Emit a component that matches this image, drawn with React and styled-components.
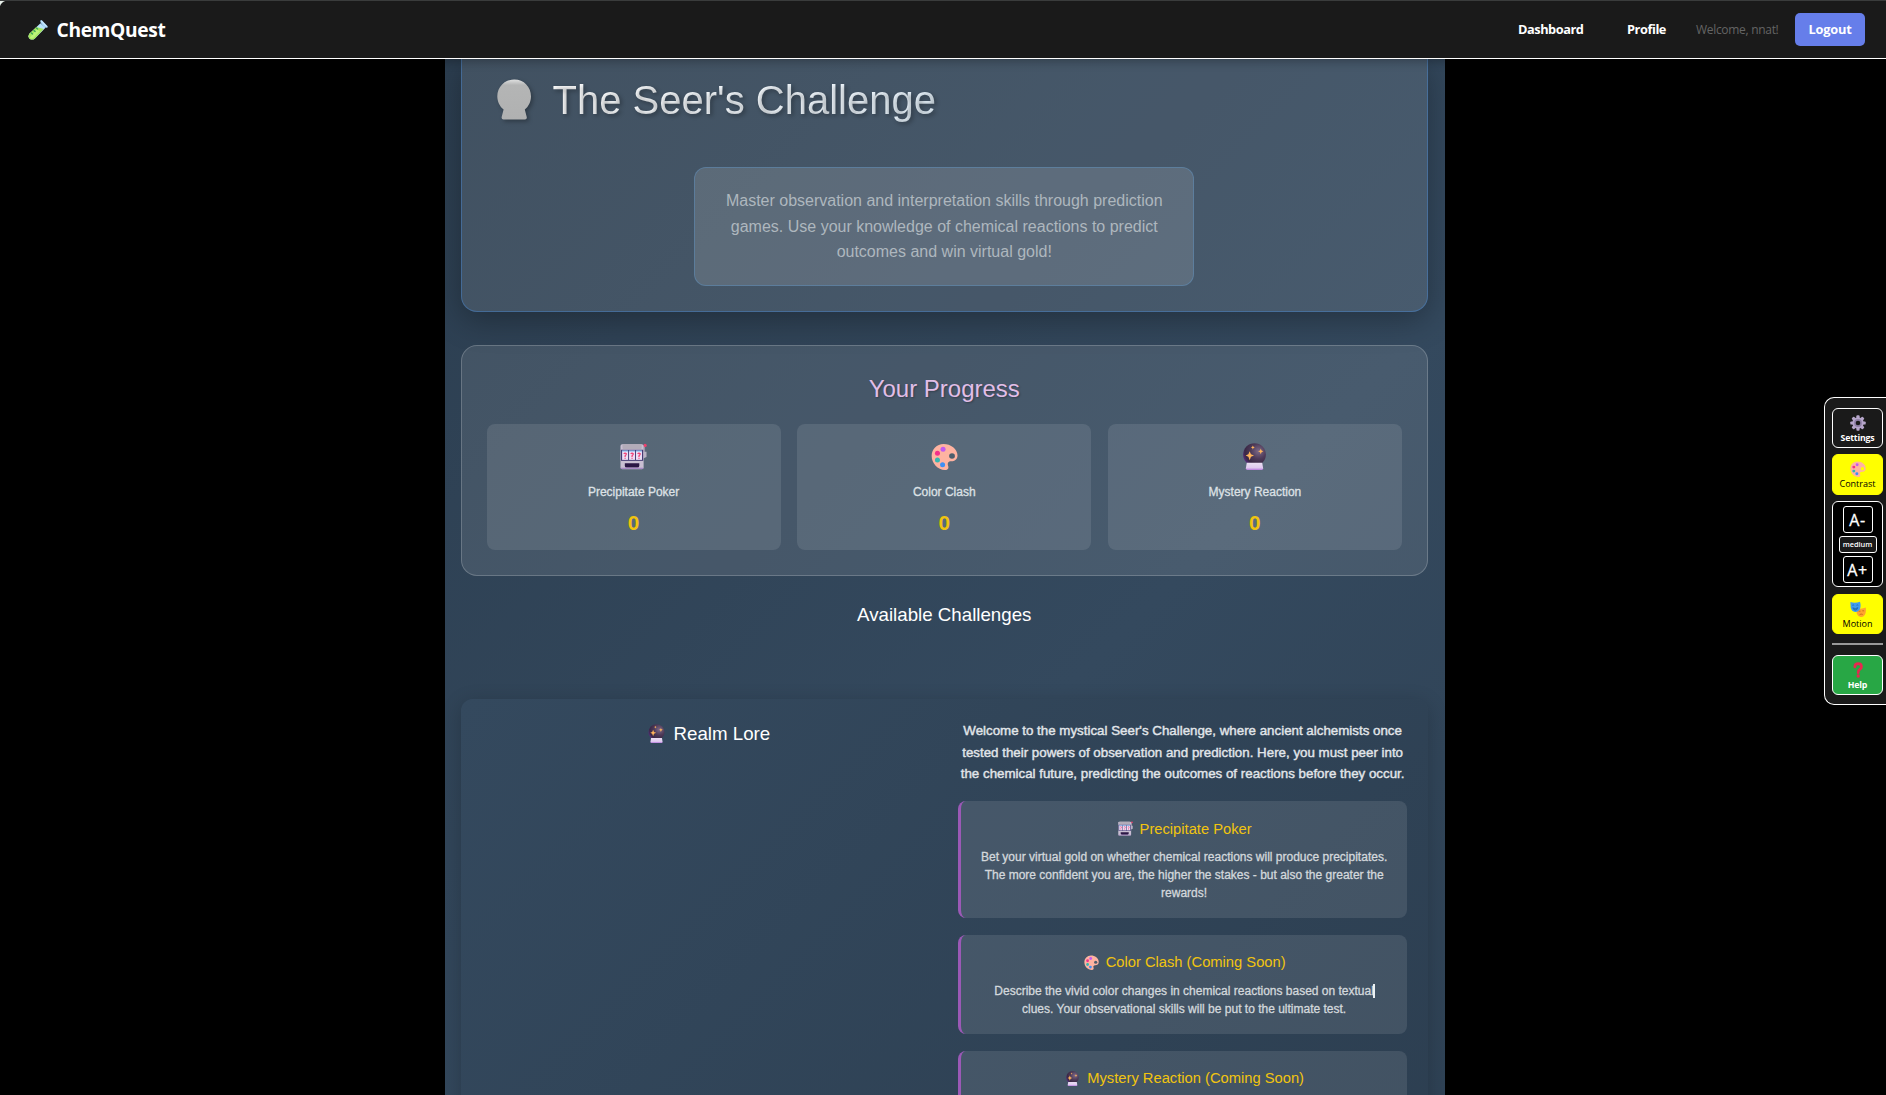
import React from 'react';
import styled, { createGlobalStyle } from 'styled-components';

const GlobalStyle = createGlobalStyle`
    *{
        box-sizing: border-box;
    }
    html, body{
        margin: 0;
        height: 100%;
        overflow: hidden;
        background: #000;
    }
    h1, h2, h3, h4, p{
        margin: 0;
        font-weight: 400;
    }
    button{
        font-family: inherit;
        margin: 0;
        padding: 0;
    }
    svg{
        display: block;
        flex: none;
    }
`;

/* Icons */

function TestTube({ size }) {
    return (
        <svg width={size} height={size} viewBox="0 0 32 32">
            <path d="M20 5 L28 12.500 L11 29.500 Q7 33 2.500 30 Q-1 26 2.500 21.500 Z" fill="#b9e3fb" />
            <path d="M13.500 11 L25 14.500 L11 29.500 Q7 33 2.500 30 Q-1 26 2.500 21.500 Z" fill="#a5e65c" />
            <path d="M14 15 L19 18 L8 29 Q5 30.500 3 28 Z" fill="#bdf57a" />
            <path d="M19.500 1.500 Q21 -1 23 1 L31 9.500 Q32.500 12 30 12.500 Q27 12.500 24 9.500 Q19.500 5 19.500 1.500Z" fill="#a8d8fb" />
            <path d="M21.500 1.500 L30 10.500" stroke="#dff3ff" strokeWidth="1.500" />
            <path d="M5 20.500l3 2.500M9 16.500l3 2.500M13 12.500l3 2.500" stroke="#2f9c5b" strokeWidth="2" />
        </svg>
    );
}

function SlotMachine({ size }) {
    return (
        <svg width={size} height={size} viewBox="0 0 28 28">
            <rect x="24" y="3" width="2" height="9" fill="#9a93a6" />
            <circle cx="26" cy="2.500" r="1.700" fill="#f0406e" />
            <path d="M24 9h3.500v5.500L24 16z" fill="#b9b2c4" />
            <rect x="0.500" y="1.200" width="24" height="26" rx="1.800" fill="#c9bfd2" />
            <rect x="2.500" y="1.200" width="20" height="5" rx="1" fill="#b3acb9" />
            <rect x="1" y="7" width="23" height="11.500" fill="#433b74" />
            <rect x="2.200" y="8" width="6.200" height="9.500" fill="#ecdff6" />
            <rect x="9.400" y="8" width="6.200" height="9.500" fill="#ecdff6" />
            <rect x="16.600" y="8" width="6.200" height="9.500" fill="#ecdff6" />
            <path d="M2.200 8.300h6.200M9.400 8.300h6.200M16.600 8.300h6.200" stroke="#74b8ef" strokeWidth="1.200" />
            <g fill="none" stroke="#ef3f74" strokeWidth="1.300">
                <path d="M3.900 11.200q1.400-1.600 2.700 0q0 1.200-1.300 2v1.200M5.300 15.200v1.100" />
                <path d="M11.100 11.200q1.400-1.600 2.700 0q0 1.200-1.300 2v1.200M12.500 15.200v1.100" />
                <path d="M18.300 11.200q1.400-1.600 2.700 0q0 1.200-1.300 2v1.200M19.700 15.200v1.100" />
            </g>
            <path d="M5 21h15v2.500q0 2-2 2H7q-2 0-2-2z" fill="#2b1745" />
            <path d="M1 26.300h23" stroke="#a98ac6" strokeWidth="1.300" />
        </svg>
    );
}

function Palette({ size, hole = '#4d5e6d' }) {
    return (
        <svg width={size} height={size} viewBox="0 0 28 28">
            <path d="M13 1C6 1 0.700 6.500 0.700 13.500C0.700 21 7 28 14.500 28C17.800 28 18.600 25.800 17.800 23.800C16.800 21 17.800 19 21 19C24.500 19 27.500 17 27.500 13C27.500 6 20.500 1 13 1Z" fill="#ffb3a1" />
            <ellipse cx="21.800" cy="13.500" rx="3" ry="2.800" fill={hole} />
            <circle cx="12.500" cy="6.500" r="2.600" fill="#c45af0" />
            <circle cx="6.700" cy="10.700" r="2.600" fill="#f2308b" />
            <circle cx="6.700" cy="17.700" r="2.600" fill="#35b6b0" />
            <circle cx="12" cy="22.500" r="2.600" fill="#3f8ff5" />
        </svg>
    );
}

function CrystalBall({ size }) {
    return (
        <svg width={size} height={size} viewBox="0 0 28 28">
            <defs>
                <radialGradient id="orb" cx="0.680" cy="0.350" r="0.750">
                    <stop offset="0" stopColor="#7d6a88" />
                    <stop offset="0.450" stopColor="#4d3a58" />
                    <stop offset="0.800" stopColor="#3a2745" />
                    <stop offset="1" stopColor="#5b2c86" />
                </radialGradient>
                <linearGradient id="orbBase" x1="0" y1="0" x2="0" y2="1">
                    <stop offset="0" stopColor="#eadff2" />
                    <stop offset="0.700" stopColor="#e0c8f0" />
                    <stop offset="1" stopColor="#b678dc" />
                </linearGradient>
            </defs>
            <circle cx="14" cy="12" r="11.800" fill="url(#orb)" />
            <path d="M6 20.500h16l1 6q0 1.500-1.500 1.500h-15q-1.500 0-1.500-1.500z" fill="url(#orbBase)" />
            <g fill="#ffb45c">
                <path d="M9 8.500l1.300 3.200L13.500 13l-3.200 1.300L9 18l-1.300-3.700L4.800 13l2.900-1.300z" />
                <path d="M20.500 5.800l.8 2 1.900.8-1.900.9-.8 2.200-.8-2.200-1.900-.9 1.900-.8z" />
                <path d="M12.300 2.600l.6 1.400 1.400.6-1.400.6-.6 1.600-.6-1.600-1.400-.6 1.400-.6z" />
            </g>
        </svg>
    );
}

function OrbSilhouette() {
    return (
        <svg width="40" height="46" viewBox="0 0 40 46" overflow="visible">
            <defs>
                <linearGradient id="silver" x1="0" y1="0" x2="0" y2="1">
                    <stop offset="0" stopColor="#dfe0e0" />
                    <stop offset="0.140" stopColor="#b4b5b5" />
                    <stop offset="1" stopColor="#b0b1b1" />
                </linearGradient>
            </defs>
            <path
                d="M17.200 0.500C7.500 0.500 0.300 8 0.300 17.300C0.300 22.500 2.700 27.500 6.600 30.600L4.600 38.300Q4.500 40.500 6.500 40.500H28Q30 40.500 29.800 38.300L27.800 30.600C31.700 27.500 34 22.500 34 17.300C34 8 27 0.500 17.200 0.500Z"
                fill="url(#silver)"
            />
        </svg>
    );
}

function Gear() {
    const teeth = [0, 45, 90, 135, 180, 225, 270, 315];
    return (
        <svg width="16" height="16" viewBox="0 0 16 16">
            <g fill="#b5a5c9">
                {teeth.map((a) => (
                    <rect key={a} x="6.400" y="0.300" width="3.200" height="4" rx="0.900" transform={`rotate(${a} 8 8)`} />
                ))}
                <circle cx="8" cy="8" r="5.700" />
            </g>
            <circle cx="8" cy="8" r="3.900" fill="#8f7fa6" />
            <circle cx="8" cy="8" r="2.300" fill="#1a1a1a" />
        </svg>
    );
}

function Masks() {
    return (
        <svg width="16" height="16" viewBox="0 0 16 16">
            <path d="M6.500 7q5 1.500 9.200-.5q.8 4.500-1 7.500-1.500 2.200-4 2-3-.4-4-3.500z" fill="#ffa52f" />
            <path d="M8.700 10.200h1.800M12.300 9.800h1.800M9.500 13.800q1.500-1.500 3.200-.3" stroke="#c96a1a" strokeWidth="0.900" fill="none" />
            <path d="M.4 1q4.500 1.600 9.600-.3q1.500 5-.6 8.300-1.800 2.300-4.300 2Q1.600 10.500.7 6.500z" fill="#3f9cf0" />
            <path d="M2.300 4.300q1-.8 1.800 0M6.500 4.300q1-.8 1.800 0M2.800 6.800q2.700 1.800 5-.2q-.5 2.600-2.400 2.600t-2.600-2.400z" stroke="#145a9c" strokeWidth="0.600" fill="#145a9c" fillOpacity="0.400" />
        </svg>
    );
}

function Question() {
    return (
        <svg width="16" height="16" viewBox="0 0 16 16">
            <path d="M4.800 4.800Q5 1.700 8.200 1.700T11.500 4.700Q11.500 6.500 9.800 7.400T8.200 10.600" fill="none" stroke="#e8284f" strokeWidth="2.700" strokeLinecap="round" />
            <circle cx="8.200" cy="14" r="1.700" fill="#e8284f" />
        </svg>
    );
}

/* Data */

const stats = [
    { icon: <SlotMachine size={27} />, label: 'Precipitate Poker', value: 0 },
    { icon: <Palette size={27} />, label: 'Color Clash', value: 0 },
    { icon: <CrystalBall size={27} />, label: 'Mystery Reaction', value: 0 },
];

const lore = [
    {
        icon: <SlotMachine size={15} />,
        title: 'Precipitate Poker',
        text: 'Bet your virtual gold on whether chemical reactions will produce precipitates. The more confident you are, the higher the stakes - but also the greater the rewards!',
    },
    {
        icon: <Palette size={15} />,
        title: 'Color Clash (Coming Soon)',
        text: (
            <>
                Describe the vivid color changes in chemical reactions based on textual<Caret />{' '}
                clues. Your observational skills will be put to the ultimate test.
            </>
        ),
    },
    {
        icon: <CrystalBall size={15} />,
        title: 'Mystery Reaction (Coming Soon)',
    },
];

function Caret() {
    return <CaretStyled />;
}

function Header() {
    return (
        <HeaderStyled>
            <Brand>
                <TestTube size={20} />
                <span>ChemQuest</span>
            </Brand>
            <Nav>
                <NavLink>Dashboard</NavLink>
                <NavLink>Profile</NavLink>
                <Welcome>Welcome, nnat!</Welcome>
                <Logout>Logout</Logout>
            </Nav>
        </HeaderStyled>
    );
}

function AccessPanel() {
    return (
        <PanelLayer>
            <Panel>
                <PanelButton>
                    <Gear />
                    <span>Settings</span>
                </PanelButton>
                <PanelButton $active>
                    <Palette size={16} hole="#ffff00" />
                    <span>Contrast</span>
                </PanelButton>
                <FontGroup>
                    <FontButton>A-</FontButton>
                    <FontSize>medium</FontSize>
                    <FontButton>A+</FontButton>
                </FontGroup>
                <PanelButton $active>
                    <Masks />
                    <span>Motion</span>
                </PanelButton>
                <Divider />
                <PanelButton $help>
                    <Question />
                    <span>Help</span>
                </PanelButton>
            </Panel>
        </PanelLayer>
    );
}

function App() {
    return (
        <>
            <GlobalStyle />
            <Page>
                <Header />
                <Realm>
                    <Hero>
                        <HeroTitle>
                            <OrbSilhouette />
                            <span>The Seer's Challenge</span>
                        </HeroTitle>
                        <HeroText>
                            Master observation and interpretation skills through prediction games. Use your knowledge of
                            chemical reactions to predict outcomes and win virtual gold!
                        </HeroText>
                    </Hero>
                    <Progress>
                        <ProgressTitle>Your Progress</ProgressTitle>
                        <StatGrid>
                            {stats.map((s) => (
                                <Stat key={s.label}>
                                    {s.icon}
                                    <StatLabel>{s.label}</StatLabel>
                                    <StatValue>{s.value}</StatValue>
                                </Stat>
                            ))}
                        </StatGrid>
                    </Progress>
                    <Challenges>Available Challenges</Challenges>
                    <Lore>
                        <LoreTitle>
                            <CrystalBall size={19} />
                            <span>Realm Lore</span>
                        </LoreTitle>
                        <div>
                            <LoreIntro>
                                Welcome to the mystical Seer's Challenge, where ancient alchemists once tested their
                                powers of observation and prediction. Here, you must peer into the chemical future,
                                predicting the outcomes of reactions before they occur.
                            </LoreIntro>
                            <LoreList>
                                {lore.map((item) => (
                                    <LoreItem key={item.title}>
                                        <h4>
                                            {item.icon}
                                            <span>{item.title}</span>
                                        </h4>
                                        {item.text && <p>{item.text}</p>}
                                    </LoreItem>
                                ))}
                            </LoreList>
                        </div>
                    </Lore>
                </Realm>
                <AccessPanel />
            </Page>
        </>
    );
}

/* Styles */

const Page = styled.div`
    height: 1095px;
    overflow: hidden;
    background: #000;
    font-family: 'Liberation Sans', Arial, sans-serif;
    color: #fff;
`;

const HeaderStyled = styled.header`
    position: relative;
    z-index: 2;
    display: flex;
    align-items: center;
    justify-content: space-between;
    height: 59px;
    padding: 0 21px 0 28px;
    border-top: 1px solid #3a3c3c;
    border-bottom: 1px solid #fff;
    background: radial-gradient(circle at 8px 8px, #1a1a1a 8px, #e8f0ea 9px) 0 0 / 8px 8px no-repeat, #1a1a1a;
    box-shadow: 0 2px 10px rgba(0, 0, 0, 0.3);
    font-family: 'Open Sans', 'Noto Sans', sans-serif;
`;

const Brand = styled.div`
    display: flex;
    align-items: center;
    gap: 8.5px;
    font-size: 19.2px;
    font-weight: 700;
    letter-spacing: -0.35px;
`;

const Nav = styled.nav`
    display: flex;
    align-items: center;
    font-size: 12.8px;
`;

const NavLink = styled.a`
    margin-right: 43.5px;
    padding-bottom: 1px;
    font-weight: 700;
    letter-spacing: -0.45px;

    & + &{
        margin-right: 30px;
    }
`;

const Welcome = styled.span`
    margin-right: 16.5px;
    color: #646464;
    font-size: 12px;
    letter-spacing: -0.3px;
`;

const Logout = styled.button`
    width: 70px;
    height: 33px;
    padding-bottom: 1px;
    border: 0;
    border-radius: 5px;
    background: #667eea;
    color: #fff;
    font-size: 12.8px;
    font-weight: 700;
    letter-spacing: -0.2px;
`;

const Realm = styled.main`
    width: 1000px;
    height: 1036px;
    margin-left: 444.5px;
    padding: 0 16.5px 0 16px;
    overflow: hidden;
    background: linear-gradient(135deg, #2c3e50 0%, #34495e 50%, #2c3e50 100%) 0 0 / 100% 1500px;
`;

const Hero = styled.section`
    display: flex;
    flex-direction: column;
    align-items: center;
    height: 253px;
    padding: 9px 25px 0;
    border: 1px solid rgba(74, 144, 226, 0.4);
    border-top: 0;
    border-radius: 0 0 16px 16px;
    background: rgba(255, 255, 255, 0.1);
    box-shadow: 0 8px 32px rgba(0, 0, 0, 0.3);
`;

const HeroTitle = styled.h1`
    display: flex;
    align-items: center;
    align-self: stretch;
    gap: 15.5px;
    height: 64px;
    padding-left: 10.5px;
    font-size: 40px;
    line-height: 64px;

    svg{
        margin-top: 4px;
        filter: drop-shadow(2px 2px 2px rgba(0, 0, 0, 0.3));
    }
    span{
        flex: 1;
        background: linear-gradient(135deg, #ffffff 0%, #f0f8fe 35%, #b5daf5 100%);
        background-clip: text;
        -webkit-background-clip: text;
        color: transparent;
        text-shadow: 2px 2px 4px rgba(0, 0, 0, 0.3);
    }
`;

const HeroText = styled.p`
    width: 500px;
    height: 119px;
    margin-top: 35px;
    padding: 20px 24px;
    border: 1px solid rgba(93, 143, 190, 0.5);
    border-radius: 12px;
    background: rgba(255, 255, 255, 0.13);
    color: #aeb7be;
    font-size: 16px;
    line-height: 25.6px;
    text-align: center;
`;

const Progress = styled.section`
    height: 231px;
    margin-top: 33px;
    padding: 25px;
    border: 1px solid rgba(255, 255, 255, 0.2);
    border-radius: 16px;
    background: rgba(255, 255, 255, 0.1);
`;

const ProgressTitle = styled.h2`
    height: 53px;
    color: #e1bee7;
    font-size: 24px;
    line-height: 36px;
    text-align: center;
    text-shadow: 1px 1px 2px rgba(0, 0, 0, 0.3);
`;

const StatGrid = styled.div`
    display: grid;
    grid-template-columns: repeat(3, 1fr);
    gap: 16.5px;
`;

const Stat = styled.div`
    display: flex;
    flex-direction: column;
    align-items: center;
    height: 126px;
    padding-top: 19px;
    border-radius: 8px;
    background: rgba(255, 255, 255, 0.1);
`;

const StatLabel = styled.span`
    margin-top: 13px;
    color: #dde1e5;
    font-size: 12px;
    line-height: 19px;
    -webkit-text-stroke: 0.3px;
`;

const StatValue = styled.span`
    margin-top: 4px;
    color: #f1c40f;
    font-size: 20.8px;
    font-weight: 700;
    line-height: 33px;
`;

const Challenges = styled.h3`
    height: 123px;
    padding-top: 25px;
    font-size: 18.72px;
    line-height: 28px;
    text-align: center;
`;

const Lore = styled.section`
    display: grid;
    grid-template-columns: 1fr 1fr;
    gap: 28px;
    height: 600px;
    padding: 21px;
    border-radius: 12px;
    background: linear-gradient(135deg, #34495e 0%, #2c3e50 100%);
    box-shadow: 0 4px 20px rgba(0, 0, 0, 0.2);
`;

const LoreTitle = styled.h3`
    display: flex;
    align-items: center;
    justify-content: center;
    gap: 8px;
    height: 28px;
    padding-left: 5px;
    font-size: 18.72px;

    svg{
        margin-top: -1px;
    }
`;

const LoreIntro = styled.p`
    color: #e2e6ea;
    font-size: 13.33px;
    line-height: 21.5px;
    text-align: center;
    -webkit-text-stroke: 0.4px;
`;

const LoreList = styled.div`
    display: flex;
    flex-direction: column;
    gap: 16.4px;
    margin-top: 16.3px;
`;

const LoreItem = styled.article`
    min-height: 99px;
    padding: 16px;
    border-left: 3px solid #9b59b6;
    border-radius: 8px;
    background: rgba(255, 255, 255, 0.1);
    text-align: center;

    h4{
        display: flex;
        align-items: center;
        justify-content: center;
        gap: 7px;
        height: 23.5px;
        margin-bottom: 8px;
        padding-left: 1px;
        color: #f1c40f;
        font-size: 14.72px;
    }
    p{
        color: #d3d8dc;
        font-size: 12px;
        line-height: 18px;
        -webkit-text-stroke: 0.3px;
    }
`;

const CaretStyled = styled.i`
    display: inline-block;
    width: 2px;
    height: 14px;
    margin: 0 -1px;
    background: #eef1f3;
    vertical-align: -3px;
`;

/* Floats over the page at the right edge */
const PanelLayer = styled.div`
    position: fixed;
    top: 397px;
    right: 0;
    z-index: 3;
`;

const Panel = styled.aside`
    display: flex;
    flex-direction: column;
    gap: 6.2px;
    width: 62px;
    height: 308px;
    padding: 9.5px 3px 0 7px;
    border: 1px solid #fff;
    border-right: 0;
    border-radius: 10px 0 0 10px;
    background: #1a1a1a;
    font-family: 'Open Sans', 'Noto Sans', sans-serif;
`;

const PanelButton = styled.button`
    display: flex;
    flex-direction: column;
    align-items: center;
    flex: none;
    width: 51px;
    height: 40.5px;
    padding-top: 6px;
    border: 1px solid ${(p) => (p.$active ? '#ffff00' : '#fff')};
    border-radius: 6px;
    background: ${(p) => (p.$active ? '#ffff00' : p.$help ? '#28a745' : '#1a1a1a')};
    color: ${(p) => (p.$active ? '#000' : '#fff')};
    font-size: ${(p) => (p.$active ? '9px' : '8.8px')};
    font-weight: ${(p) => (p.$active ? 500 : 700)};
    line-height: 14px;
    letter-spacing: ${(p) => (p.$active ? 0 : '-0.2px')};
`;

const FontGroup = styled.div`
    display: flex;
    flex-direction: column;
    align-items: center;
    flex: none;
    gap: 3px;
    width: 51px;
    height: 86.5px;
    padding-top: 4px;
    border: 1px solid #fff;
    border-radius: 6px;
    background: #000;
`;

const FontButton = styled.button`
    width: 30px;
    height: 27px;
    border: 1px solid #fff;
    border-radius: 3px;
    background: #000;
    color: #fff;
    font-size: 16px;
    line-height: 26px;
    letter-spacing: 0.6px;
    -webkit-text-stroke: 0.3px;
`;

const FontSize = styled.span`
    width: 38px;
    height: 17px;
    border: 1px solid #fff;
    border-radius: 3px;
    background: #1a1a1a;
    font-size: 7.4px;
    font-weight: 600;
    line-height: 14px;
    text-align: center;
`;

const Divider = styled.hr`
    flex: none;
    width: 51px;
    height: 1.5px;
    margin: 3px 0 4px;
    border: 0;
    background: #999;
`;

export default App;
